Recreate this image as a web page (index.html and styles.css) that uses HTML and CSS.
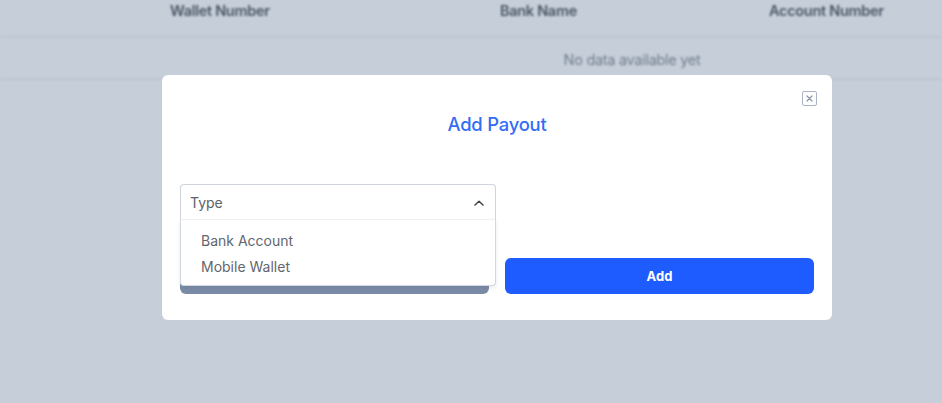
FILE: index.html
```html
<!DOCTYPE html>
<html lang="en">
<head>
<meta charset="utf-8">
<title>Add Payout</title>
<link rel="stylesheet" href="styles.css">
</head>
<body>
<div class="backdrop">
  <div class="table">
    <div class="thead">
      <div class="th th-wallet">Wallet Number</div>
      <div class="th th-bank">Bank Name</div>
      <div class="th th-account">Account Number</div>
    </div>
    <div class="tbody">
      <div class="empty">No data available yet</div>
    </div>
  </div>
</div>

<div class="modal">
  <button class="close" aria-label="Close">
    <svg width="7" height="7" viewBox="0 0 7 7"><path d="M1 1L6 6M6 1L1 6" stroke="#8a94a6" stroke-width="1.2" stroke-linecap="round"/></svg>
  </button>
  <h2 class="title">Add Payout</h2>
  <div class="field">
    <div class="select">
      <span class="select-label">Type</span>
      <svg class="chev" width="10" height="6" viewBox="0 0 10 6"><path d="M1 5L5 1.3L9 5" fill="none" stroke="#444" stroke-width="1.5" stroke-linecap="round" stroke-linejoin="round"/></svg>
    </div>
    <ul class="menu">
      <li class="option">Bank Account</li>
      <li class="option">Mobile Wallet</li>
    </ul>
  </div>
  <div class="actions">
    <button class="btn btn-cancel">Cancel</button>
    <button class="btn btn-add">Add</button>
  </div>
</div>
</body>
</html>
```
FILE: styles.css
```css
* { box-sizing: border-box; }
html, body { margin: 0; padding: 0; }
body {
  width: 942px;
  height: 403px;
  overflow: hidden;
  background: #c5ced9;
  font-family: Inter, "Noto Sans", sans-serif;
  position: relative;
}
.backdrop {
  filter: blur(1.3px);
}
.thead {
  height: 38px;
  display: grid;
  grid-template-columns: 170px 330px 269px 1fr;
  align-items: start;
  padding-top: 2px;
  border-bottom: 2px solid #bec7d2;
}
.th {
  font-size: 14.5px;
  font-weight: 600;
  color: #4b5565;
  letter-spacing: -0.3px;
}
.th-wallet { grid-column: 2; }
.th-bank { grid-column: 3; }
.th-account { grid-column: 4; }
.tbody {
  height: 42px;
  border-bottom: 2px solid #bec7d2;
  display: flex;
  justify-content: center;
  align-items: center;
  padding-left: 322px;
  padding-top: 2px;
}
.empty {
  font-size: 14.5px;
  color: #737d8b;
  letter-spacing: -0.3px;
}
.modal {
  position: absolute;
  left: 162px;
  top: 75px;
  width: 670px;
  height: 245px;
  background: #fff;
  border-radius: 6px;
  padding: 37px 18px 26px;
  display: flex;
  flex-direction: column;
}
.close {
  position: absolute;
  top: 16px;
  right: 15px;
  width: 15px;
  height: 15px;
  padding: 0;
  border: 1px solid #a9b3c4;
  border-radius: 2px;
  background: #fff;
  display: flex;
  align-items: center;
  justify-content: center;
}
.title {
  margin: 0;
  text-align: center;
  font-size: 18.4px;
  line-height: 24px;
  font-weight: 500;
  color: #336cf5;
  letter-spacing: -0.2px;
}
.field {
  position: relative;
  margin-top: 48px;
  width: 316px;
}
.select {
  height: 36px;
  border: 1px solid #cfd4dc;
  border-bottom-color: #f1f2f4;
  border-radius: 4px 4px 0 0;
  display: flex;
  align-items: center;
  justify-content: space-between;
  padding: 1px 11px 0 9px;
  background: #fff;
}
.select-label {
  font-size: 14px;
  color: #5d6168;
}
.menu {
  position: absolute;
  left: 0;
  top: 36px;
  width: 316px;
  margin: 0;
  padding: 8px 0 5px;
  list-style: none;
  background: #fff;
  border: 1px solid #d3d7de;
  border-top: none;
  border-radius: 0 0 4px 4px;
  box-shadow: 0 2px 4px rgba(60, 70, 90, 0.12);
  z-index: 2;
}
.option {
  height: 26px;
  line-height: 26px;
  padding-left: 20px;
  font-size: 14px;
  color: #62666d;
}
.actions {
  margin-top: 38px;
  display: grid;
  grid-template-columns: 1fr 1fr;
  gap: 16px;
}
.btn {
  height: 36px;
  border: none;
  border-radius: 6px;
  font-family: Inter, "Noto Sans", sans-serif;
  font-size: 13px;
  font-weight: 700;
  color: #fff;
}
.btn-cancel { background: #7b8ba7; }
.btn-add { background: #1f5cff; }
```
